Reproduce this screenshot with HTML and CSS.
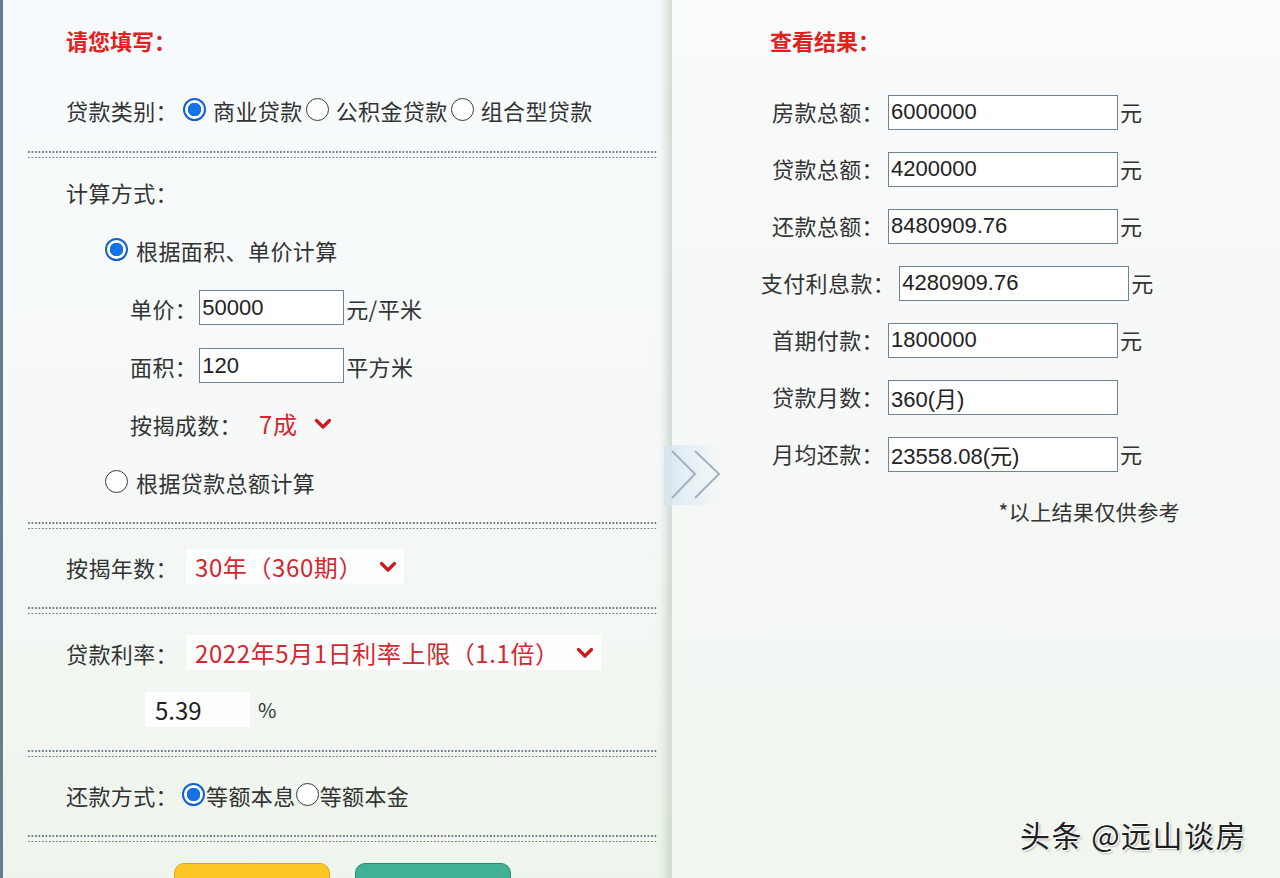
FILE: index.html
```html
<!DOCTYPE html>
<html lang="zh-CN">
<head>
  <meta charset="UTF-8" />
  <meta name="viewport" content="width=device-width, initial-scale=1" />
  <title>房贷计算器</title>

  <link rel="stylesheet" href="styles.css">
</head>
<body>
  <div class="calc">
    <!-- 左侧：填写 -->
    <section class="fill-panel">
      <div class="block block-top">
        <h2 class="panel-title">请您填写：</h2>
        <div class="row">
          <span class="label">贷款类别：</span>
          <span class="radio checked first"></span><span class="opt-text">商业贷款</span>
          <span class="radio"></span><span class="opt-text">公积金贷款</span>
          <span class="radio"></span><span class="opt-text">组合型贷款</span>
        </div>
      </div>

      <div class="divider"></div>

      <div class="block block-method">
        <div class="row">
          <span class="label">计算方式：</span>
        </div>
        <div class="row indent-1">
          <span class="radio checked"></span><span class="opt-text wide">根据面积、单价计算</span>
        </div>
        <div class="row indent-2">
          <span class="label">单价：</span>
          <input class="field" type="text" value="50000" readonly>
          <span class="unit">元/平米</span>
        </div>
        <div class="row indent-2">
          <span class="label">面积：</span>
          <input class="field" type="text" value="120" readonly>
          <span class="unit">平方米</span>
        </div>
        <div class="row indent-2">
          <span class="label">按揭成数：</span>
          <div class="select select-plain">
            <span class="select-text">7成</span>
            <svg class="chevron" viewBox="0 0 18 12" width="18" height="12"><polyline points="2.5,2.5 9,9 15.5,2.5" /></svg>
          </div>
        </div>
        <div class="row indent-1">
          <span class="radio"></span><span class="opt-text wide">根据贷款总额计算</span>
        </div>
      </div>

      <div class="divider"></div>

      <div class="block">
        <div class="row">
          <span class="label">按揭年数：</span>
          <div class="select">
            <span class="select-text">30年（360期）</span>
            <svg class="chevron" viewBox="0 0 18 12" width="18" height="12"><polyline points="2.5,2.5 9,9 15.5,2.5" /></svg>
          </div>
        </div>
      </div>

      <div class="divider"></div>

      <div class="block block-rate">
        <div class="row">
          <span class="label">贷款利率：</span>
          <div class="select">
            <span class="select-text">2022年5月1日利率上限（1.1倍）</span>
            <svg class="chevron" viewBox="0 0 18 12" width="18" height="12"><polyline points="2.5,2.5 9,9 15.5,2.5" /></svg>
          </div>
        </div>
        <div class="row indent-rate">
          <input class="rate-field" type="text" value="5.39" readonly>
          <span class="percent">%</span>
        </div>
      </div>

      <div class="divider"></div>

      <div class="block">
        <div class="row">
          <span class="label">还款方式：</span>
          <span class="radio checked tight"></span><span class="opt-text flush">等额本息</span>
          <span class="radio tight"></span><span class="opt-text flush">等额本金</span>
        </div>
      </div>

      <div class="divider"></div>

      <div class="actions">
        <button class="btn btn-calc" type="button" aria-label="开始计算"></button>
        <button class="btn btn-reset" type="button" aria-label="重新计算"></button>
      </div>
    </section>

    <!-- 右侧：结果 -->
    <section class="result-panel">
      <h2 class="panel-title result-title">查看结果：</h2>
      <div class="results">
        <div class="result-row">
          <span class="label">房款总额：</span>
          <input class="field wide-field" type="text" value="6000000" readonly>
          <span class="unit">元</span>
        </div>
        <div class="result-row">
          <span class="label">贷款总额：</span>
          <input class="field wide-field" type="text" value="4200000" readonly>
          <span class="unit">元</span>
        </div>
        <div class="result-row">
          <span class="label">还款总额：</span>
          <input class="field wide-field" type="text" value="8480909.76" readonly>
          <span class="unit">元</span>
        </div>
        <div class="result-row">
          <span class="label">支付利息款：</span>
          <input class="field wide-field" type="text" value="4280909.76" readonly>
          <span class="unit">元</span>
        </div>
        <div class="result-row">
          <span class="label">首期付款：</span>
          <input class="field wide-field" type="text" value="1800000" readonly>
          <span class="unit">元</span>
        </div>
        <div class="result-row">
          <span class="label">贷款月数：</span>
          <input class="field wide-field" type="text" value="360(月)" readonly>
          <span class="unit hidden">元</span>
        </div>
        <div class="result-row">
          <span class="label">月均还款：</span>
          <input class="field wide-field" type="text" value="23558.08(元)" readonly>
          <span class="unit">元</span>
        </div>
      </div>
      <p class="note">*以上结果仅供参考</p>
    </section>

    <div class="switch-arrow">
      <svg viewBox="0 0 60 60" width="60" height="60">
        <polyline points="8,6 31,29 8,53" />
        <polyline points="31,6 55,29 31,53" />
      </svg>
    </div>

    <div class="watermark">头条 @远山谈房</div>
  </div>
</body>
</html>
```

FILE: styles.css
```css
*, *::before, *::after {
  box-sizing: border-box;
}

html, body {
  height: 878px;
  overflow: hidden;
}

body {
  margin: 0;
  font-family: "Noto Sans CJK SC", "Noto Sans", sans-serif;
  font-size: 22px;
  letter-spacing: 0.4px;
  color: #333;
  background: #f4f8f4;
}

.calc {
  position: relative;
  display: flex;
  height: 878px;
}

/* left panel */
.fill-panel {
  width: 670px;
  flex: none;
  border-left: 3px solid #647d91;
  padding: 0 13px 0 25px;
  background: linear-gradient(180deg, #f8fbfd 0%, #f6f9f8 50%, #eef5ec 100%);
  box-shadow: inset -14px 0 12px -12px rgba(110, 125, 115, 0.35);
}

.block {
  padding: 19px 0 19px 38px;
}

.block-top {
  padding-top: 20px;
  padding-bottom: 20px;
}

.block-method {
  padding-top: 15px;
  padding-bottom: 19px;
  display: flex;
  flex-direction: column;
  gap: 18px;
}

.block-rate {
  padding-top: 20px;
  display: flex;
  flex-direction: column;
  gap: 17px;
}

.panel-title {
  margin: 0 0 31px;
  height: 40px;
  line-height: 40px;
  font-size: 22px;
  font-weight: bold;
  letter-spacing: 0;
  color: #e3211c;
}

.row {
  display: flex;
  align-items: center;
  height: 40px;
  padding-bottom: 3px;
  white-space: nowrap;
}

.indent-1 { padding-left: 39px; }
.indent-2 { padding-left: 64px; }
.indent-rate { padding-left: 79px; }

.label {
  flex: none;
}

/* radios */
.radio {
  flex: none;
  width: 23px;
  height: 23px;
  border-radius: 50%;
  border: 1.5px solid #3a3a3a;
  background: #fff;
  margin-left: 3px;
}

.radio.first { margin-left: 5px; }
.indent-1 .radio { margin-left: 0; }

.radio.checked {
  border: 2px solid #1260d0;
  background: radial-gradient(circle, #1473e6 0 6.5px, #fff 7px);
}

.radio.tight { margin-left: 0; }
.radio.checked.tight { margin-left: 4px; }

.opt-text {
  margin-left: 7px;
}

.opt-text.wide { margin-left: 8px; }
.opt-text.flush { margin-left: 1px; }

/* inputs */
.field {
  width: 145px;
  height: 35px;
  margin: 0 2px;
  padding: 0 2px;
  border: 1px solid #6f8398;
  border-radius: 0;
  background: #fff;
  font: 22px "Liberation Sans", Arial, sans-serif;
  color: #222;
  outline: none;
}

.wide-field {
  width: 230px;
  margin-left: 4px;
}

.unit.hidden {
  visibility: hidden;
}

/* selects */
.select {
  display: flex;
  align-items: center;
  height: 35px;
  margin-left: 8px;
  padding: 0 7px 0 9px;
  background: rgba(255, 255, 255, 0.85);
  font-size: 24px;
  letter-spacing: 0.6px;
  color: #d2282e;
}

.select-plain {
  background: transparent;
}

.chevron {
  margin-left: 16px;
  fill: none;
  stroke: #d01818;
  stroke-width: 3.2;
  stroke-linecap: round;
  stroke-linejoin: round;
}

.rate-field {
  width: 105px;
  height: 35px;
  padding: 0 10px;
  border: none;
  background: rgba(255, 255, 255, 0.85);
  font: 24px "Noto Sans CJK SC", "Noto Sans", sans-serif;
  color: #222;
  outline: none;
}

.percent {
  margin-left: 8px;
  font-size: 20px;
}

/* dotted divider */
.divider {
  height: 7px;
  background-image:
    linear-gradient(90deg, #6f8086 1.5px, transparent 1.5px),
    linear-gradient(90deg, #6f8086 1.5px, transparent 1.5px);
  background-size: 3.5px 1.5px;
  background-repeat: repeat-x;
  background-position: 0 0, 0 100%;
}

.actions {
  display: flex;
  gap: 25px;
  margin-top: 21px;
  padding-left: 146px;
}

.btn {
  width: 156px;
  height: 46px;
  border-radius: 10px;
  cursor: pointer;
}

.btn-calc {
  background: #fcc724;
  border: 1px solid #e2a512;
}

.btn-reset {
  background: #40b194;
  border: 1px solid #2d8a72;
}

/* right panel */
.result-panel {
  flex: 1;
  border-left: 2px solid #d3e2cd;
  padding: 20px 38px 0 0;
  background: linear-gradient(180deg, #f9fbfc 0%, #f5f8f6 50%, #f1f6ef 100%);
}

.result-title {
  margin: 0 0 32px 98px;
}

.results {
  display: flex;
  flex-direction: column;
  gap: 17px;
}

.result-row {
  display: flex;
  justify-content: center;
  align-items: center;
  height: 40px;
  white-space: nowrap;
}

.result-row .label,
.result-row .unit {
  padding-bottom: 3px;
}

.result-row .unit {
  width: 22px;
}

.note {
  margin: 17px 62px 0 0;
  height: 40px;
  line-height: 40px;
  text-align: right;
  font-size: 21px;
}

/* arrow between panels */
.switch-arrow {
  position: absolute;
  left: 664px;
  top: 445px;
  width: 62px;
  height: 60px;
  background: linear-gradient(90deg, rgba(214, 230, 242, 0.9), rgba(232, 240, 247, 0.4) 70%, transparent);
}

.switch-arrow svg {
  display: block;
  fill: none;
  stroke: #a3b2bf;
  stroke-width: 2;
}

.watermark {
  position: absolute;
  left: 1020px;
  top: 812px;
  font-size: 30px;
  letter-spacing: 1.5px;
  color: #1e1e1e;
  white-space: nowrap;
  text-shadow: 1px 1px 0 #fff, -1px -1px 0 #fff, 2px 2px 2px rgba(0, 0, 0, 0.25);
}
```
